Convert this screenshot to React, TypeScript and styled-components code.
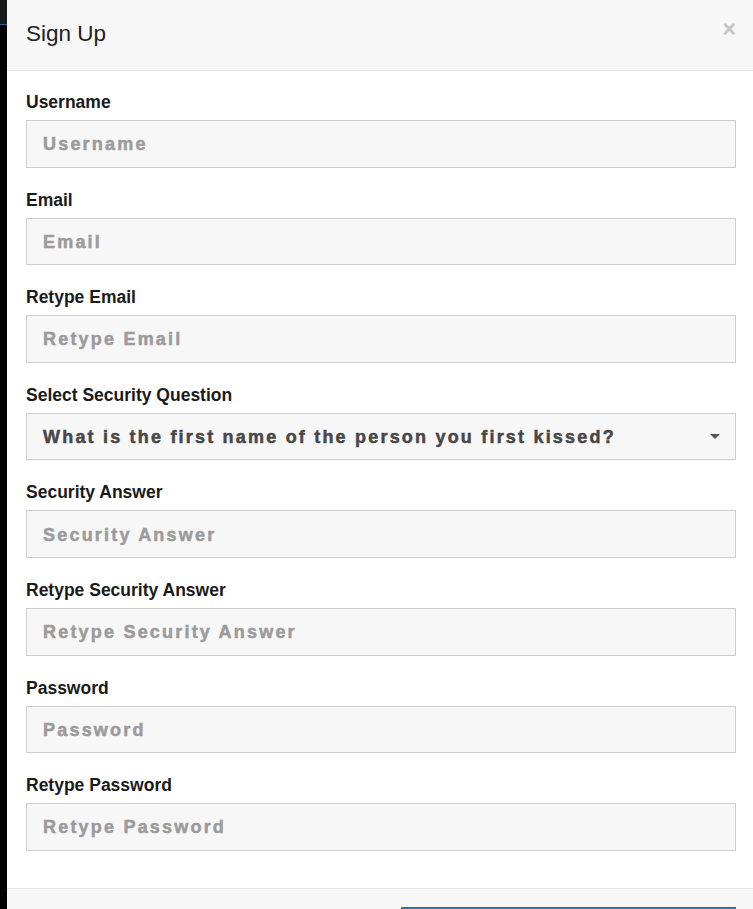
import styled, { createGlobalStyle } from "styled-components";

const GlobalStyle = createGlobalStyle`
  html, body {
    margin: 0;
    padding: 0;
    height: 100%;
    overflow: hidden;
    background: #000;
  }
  #root {
    height: 100%;
  }
  * {
    box-sizing: border-box;
  }
`;

const fields = [
  { label: "Username", placeholder: "Username" },
  { label: "Email", placeholder: "Email" },
  { label: "Retype Email", placeholder: "Retype Email" },
  { label: "Select Security Question", select: "What is the first name of the person you first kissed?" },
  { label: "Security Answer", placeholder: "Security Answer" },
  { label: "Retype Security Answer", placeholder: "Retype Security Answer" },
  { label: "Password", placeholder: "Password", type: "password" },
  { label: "Retype Password", placeholder: "Retype Password", type: "password" },
];

export default function App() {
  return (
    <Page>
      <GlobalStyle />
      <Backdrop>
        <BackdropNav />
      </Backdrop>

      <Modal>
        <ModalHeader>
          <ModalTitle>Sign Up</ModalTitle>
          <CloseButton aria-label="Close">×</CloseButton>
        </ModalHeader>

        <ModalBody>
          {fields.map((f) => (
            <FormGroup key={f.label}>
              <Label>{f.label}</Label>
              {f.select ? (
                <SelectBox>
                  <span>{f.select}</span>
                  <Caret />
                </SelectBox>
              ) : (
                <TextInput type={f.type || "text"} placeholder={f.placeholder} />
              )}
            </FormGroup>
          ))}
        </ModalBody>

        <ModalFooter>
          <SubmitButton>Sign Up</SubmitButton>
        </ModalFooter>
      </Modal>
    </Page>
  );
}

const Page = styled.div`
  display: flex;
  height: 100%;
  font-family: "Liberation Sans", Arial, sans-serif;
  color: #222;
`;

// the dark page behind the modal, only a sliver of it shows
const Backdrop = styled.div`
  width: 7px;
  flex-shrink: 0;
  background: #020202;
`;

const BackdropNav = styled.div`
  height: 25px;
  background: #1b1b1b;
  border-bottom: 1px solid #2e5f96;
`;

const Modal = styled.div`
  flex-grow: 1;
  min-width: 0;
  background: #fff;
  display: flex;
  flex-direction: column;
  overflow: hidden;
`;

const ModalHeader = styled.div`
  flex-shrink: 0;
  display: flex;
  align-items: flex-start;
  justify-content: space-between;
  height: 71px;
  padding: 20px 17px 0 19px;
  background: #f7f7f7;
  border-bottom: 1px solid #e5e5e5;
`;

const ModalTitle = styled.h4`
  margin: 0;
  font-size: 22.5px;
  font-weight: normal;
  line-height: 28px;
  color: #222;
`;

const CloseButton = styled.button`
  border: 0;
  background: none;
  padding: 0;
  margin-top: -5px;
  font-family: "Liberation Sans", Arial, sans-serif;
  font-size: 23px;
  font-weight: bold;
  line-height: 28px;
  color: #c4c4c4;
  cursor: pointer;
`;

const ModalBody = styled.div`
  flex-shrink: 0;
  padding: 18px 17px 18px 19px;
`;

const FormGroup = styled.div`
  margin-bottom: 19px;
`;

const Label = styled.label`
  display: block;
  margin-bottom: 5px;
  font-size: 17.5px;
  font-weight: bold;
  line-height: 26px;
  color: #1a1a1a;
`;

const fieldBox = `
  display: flex;
  align-items: center;
  width: 100%;
  height: 47.6px;
  padding: 2px 16px 0;
  background: #f7f7f7;
  border: 1px solid #cdcdcd;
  border-radius: 0;
  font-family: "Liberation Sans", Arial, sans-serif;
  font-size: 18px;
  font-weight: bold;
  letter-spacing: 2.2px;
  -webkit-text-stroke: 0.5px currentColor;
`;

const TextInput = styled.input`
  ${fieldBox}
  color: #444;
  outline: none;

  &::placeholder {
    color: #9b9b9b;
    -webkit-text-stroke: 0.5px #9b9b9b;
    opacity: 1;
  }
`;

const SelectBox = styled.div`
  ${fieldBox}
  justify-content: space-between;
  color: #474747;
  padding-right: 15px;
`;

const Caret = styled.span`
  width: 0;
  height: 0;
  margin-top: -2px;
  border-left: 5px solid transparent;
  border-right: 5px solid transparent;
  border-top: 5px solid #555;
`;

const ModalFooter = styled.div`
  flex-grow: 1;
  display: flex;
  justify-content: flex-end;
  padding: 18px 17px 0 19px;
  background: #f7f7f7;
  border-top: 1px solid #e5e5e5;
`;

const SubmitButton = styled.button`
  flex-shrink: 0;
  width: 335px;
  height: 46px;
  background: #337ab7;
  border: 1px solid #2e6da4;
  color: #fff;
  font-family: "Liberation Sans", Arial, sans-serif;
  font-size: 17px;
`;
